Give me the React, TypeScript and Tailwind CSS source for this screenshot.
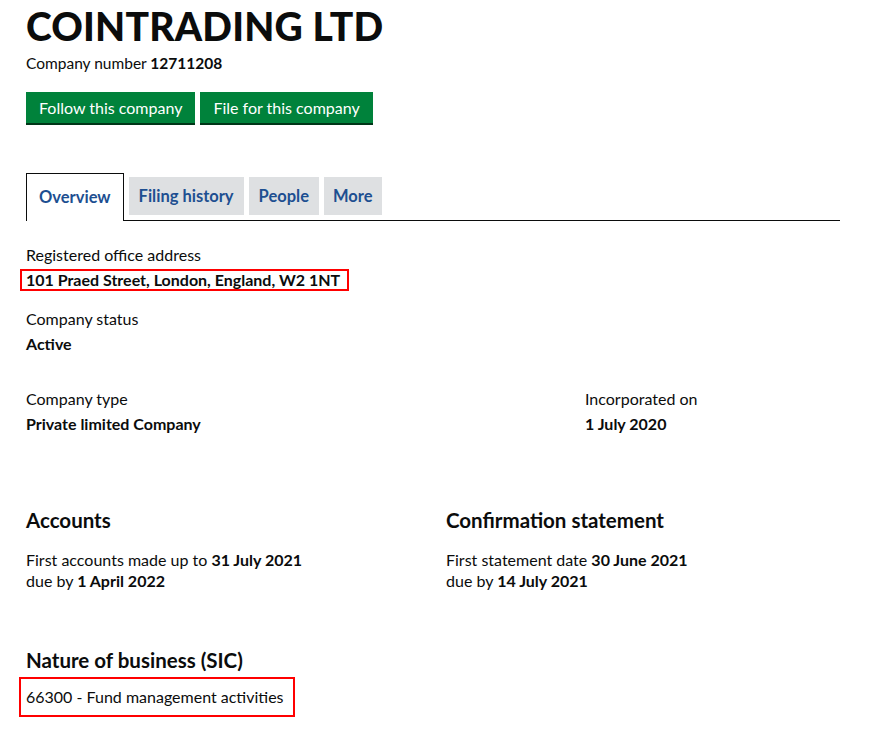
export default function App() {
  return (
    <div className="w-[880px] h-[729px] bg-white pl-[26px] pr-[40px] pt-[3px] text-[#0b0c0c] font-['Lato',sans-serif]">
      <h1 className="text-[39px] leading-[46px] font-black tracking-[0.2px]">COINTRADING LTD</h1>
      <p className="text-[15.5px] leading-[20px] mt-[4px]">
        Company number <strong className="font-bold">12711208</strong>
      </p>
      <div className="flex gap-[5px] mt-[19px]">
        <button className="bg-[#00823b] text-white text-[16px] leading-[20px] px-[13px] pt-[6px] pb-[5px] shadow-[0_2px_0_#003618]">
          Follow this company
        </button>
        <button className="bg-[#00823b] text-white text-[16px] leading-[20px] px-[13px] pt-[6px] pb-[5px] shadow-[0_2px_0_#003618]">
          File for this company
        </button>
      </div>

      <div className="flex items-end mt-[50px] border-b border-[#0b0c0c]">
        <div className="border border-b-0 border-[#0b0c0c] bg-white px-[12px] h-[48px] -mb-px flex items-center text-[16.5px] font-bold text-[#1d4f91]">
          Overview
        </div>
        <div className="flex gap-[5px] ml-[5px] mb-[5px]">
          <div className="bg-[#dee0e2] h-[38px] px-[10px] flex items-center text-[16.5px] font-bold text-[#1d4f91]">Filing history</div>
          <div className="bg-[#dee0e2] h-[38px] px-[10px] flex items-center text-[16.5px] font-bold text-[#1d4f91]">People</div>
          <div className="bg-[#dee0e2] h-[38px] px-[9px] flex items-center text-[16.5px] font-bold text-[#1d4f91]">More</div>
        </div>
      </div>

      <div className="mt-[24px] text-[16px] leading-[20px]">
        <p>Registered office address</p>
        <div className="mt-[4px] -ml-[6px] inline-block border-2 border-[#ff0000] pl-[4px] pr-[7px] leading-[18px] font-bold">
          101 Praed Street, London, England, W2 1NT
        </div>

        <p className="mt-[18px]">Company status</p>
        <p className="mt-[5px] font-bold">Active</p>

        <div className="grid grid-cols-[559px_1fr] mt-[35px]">
          <div>
            <p>Company type</p>
            <p className="mt-[5px] font-bold">Private limited Company</p>
          </div>
          <div>
            <p>Incorporated on</p>
            <p className="mt-[5px] font-bold">1 July 2020</p>
          </div>
        </div>

        <div className="grid grid-cols-[420px_1fr] mt-[74px]">
          <div>
            <h2 className="text-[20.5px] leading-[24px] font-bold">Accounts</h2>
            <p className="mt-[18px]">
              First accounts made up to <strong className="font-bold">31 July 2021</strong>
            </p>
            <p className="mt-[1px]">
              due by <strong className="font-bold">1 April 2022</strong>
            </p>
          </div>
          <div>
            <h2 className="text-[20.5px] leading-[24px] font-bold">Confirmation statement</h2>
            <p className="mt-[18px]">
              First statement date <strong className="font-bold">30 June 2021</strong>
            </p>
            <p className="mt-[1px]">
              due by <strong className="font-bold">14 July 2021</strong>
            </p>
          </div>
        </div>

        <h2 className="mt-[57px] text-[20.5px] leading-[24px] font-bold">Nature of business (SIC)</h2>
        <div className="mt-[5px] -ml-[7px] inline-block border-2 border-[#ff0000] pl-[5px] pr-[9px] pt-[8px] pb-[8px]">
          66300 - Fund management activities
        </div>
      </div>
    </div>
  );
}
